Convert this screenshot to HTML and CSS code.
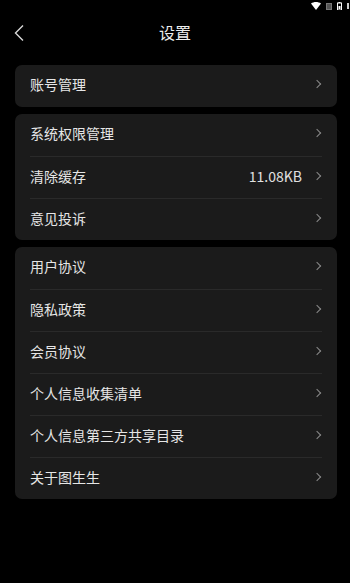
FILE: index.html
```html
<!DOCTYPE html>
<html>
<head>
    <meta charset="utf-8">
    <title>设置</title>
    <link rel="stylesheet" href="styles.css">
</head>
<body>
<div class="status-bar">
    <svg class="wifi" width="10" height="8" viewBox="0 0 10 8"><path d="M0 1.5C2.8-0.5 7.2-0.5 10 1.5L5 8z" fill="#fff"/></svg>
    <svg class="sim" width="6" height="7" viewBox="0 0 6 7"><rect x="0.5" y="0.5" width="5" height="6" fill="#555" stroke="#777" stroke-width="1"/></svg>
    <svg class="battery" width="5" height="8" viewBox="0 0 5 8"><rect x="1.5" y="0" width="2" height="1" fill="#fff"/><rect x="0.5" y="1" width="4" height="7" fill="none" stroke="#fff" stroke-width="1"/><rect x="1.5" y="4" width="2" height="3" fill="#fff"/></svg>
    <span class="dot"></span>
</div>
<div class="nav">
    <svg class="back" width="12" height="18" viewBox="0 0 12 18"><path d="M10 1.5L2.5 9 10 16.5" fill="none" stroke="#d8d8d8" stroke-width="1.4"/></svg>
    <div class="nav-title">设置</div>
</div>

<div class="content">
    <div class="card">
        <div class="row"><span class="label">账号管理</span><span class="arrow"></span></div>
    </div>
    <div class="card">
        <div class="row"><span class="label">系统权限管理</span><span class="arrow"></span></div>
        <div class="row"><span class="label">清除缓存</span><span class="value">11.08KB</span><span class="arrow"></span></div>
        <div class="row"><span class="label">意见投诉</span><span class="arrow"></span></div>
    </div>
    <div class="card">
        <div class="row"><span class="label">用户协议</span><span class="arrow"></span></div>
        <div class="row"><span class="label">隐私政策</span><span class="arrow"></span></div>
        <div class="row"><span class="label">会员协议</span><span class="arrow"></span></div>
        <div class="row"><span class="label">个人信息收集清单</span><span class="arrow"></span></div>
        <div class="row"><span class="label">个人信息第三方共享目录</span><span class="arrow"></span></div>
        <div class="row"><span class="label">关于图生生</span><span class="arrow"></span></div>
    </div>
</div>
</body>
</html>
```

FILE: styles.css
```css
body {
    margin: 0;
    background-color: #000;
    color: #e6e6e6;
    font-family: "Noto Sans CJK SC", "Noto Sans", sans-serif;
}

.status-bar {
    height: 12px;
    display: flex;
    justify-content: flex-end;
    align-items: center;
    gap: 5px;
    padding-right: 1px;
}

.status-bar .dot {
    width: 2px;
    height: 6px;
    background-color: #ccc;
}

.nav {
    position: relative;
    height: 40px;
    display: flex;
    align-items: center;
    justify-content: center;
}

.back {
    position: absolute;
    left: 13px;
    top: 12px;
}

.nav-title {
    font-size: 16px;
    color: #eee;
}

.content {
    padding: 13px 13px 0 15px;
    display: flex;
    flex-direction: column;
    gap: 7px;
}

.card {
    background-color: #1b1b1b;
    border-radius: 7px;
    padding: 0 15px;
}

.row {
    height: 42px;
    display: flex;
    align-items: center;
    box-sizing: border-box;
    font-size: 14px;
    line-height: 1;
    padding-bottom: 4px;
}

.row + .row {
    border-top: 1px solid #2a2a2a;
}

.label {
    flex: 1;
    color: #e6e6e6;
}

.value {
    color: #e0e0e0;
    margin-right: 12px;
}

.arrow {
    width: 5px;
    height: 5px;
    border-top: 1.3px solid #8a8a8a;
    border-right: 1.3px solid #8a8a8a;
    transform: rotate(45deg);
    margin-right: 2px;
}
```
